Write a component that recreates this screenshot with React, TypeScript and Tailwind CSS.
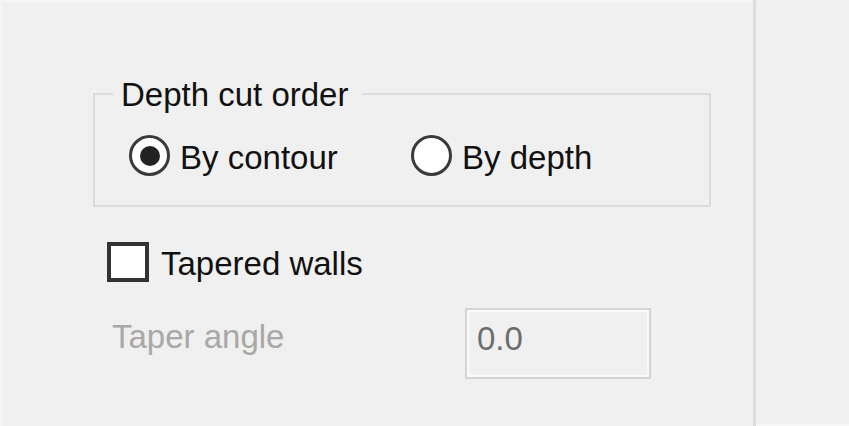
export default function App() {
  const font = { fontFamily: '"Liberation Sans", Arial, sans-serif' };

  return (
    <div
      className="flex h-[426px] w-[849px] overflow-hidden bg-[#f0f0f0] text-[33px] leading-[38px] text-[#111]"
      style={font}
    >
      <div className="flex w-[753px] flex-col border-l-2 border-t-2 border-[#f6f6f6] pt-[91px]">
        {/* Group box */}
        <div className="ml-[91px] flex h-[114px] w-[618px] flex-col border-2 border-[#dcdcdc]">
          <span className="-mt-[19px] ml-[18px] self-start bg-[#f0f0f0] pl-2 pr-[14px]">Depth cut order</span>
          <div className="ml-[34px] mt-[21px] flex">
            <label className="flex w-[282px] items-start">
              <span className="flex h-[41px] w-[41px] items-center justify-center rounded-full border-[3px] border-[#3a3a3a] bg-white">
                <span className="h-[20px] w-[20px] rounded-full bg-[#222]" />
              </span>
              <span className="ml-[10px] mt-1">By contour</span>
            </label>
            <label className="flex items-start">
              <span className="h-[41px] w-[41px] rounded-full border-[3px] border-[#3a3a3a] bg-white" />
              <span className="ml-[10px] mt-1">By depth</span>
            </label>
          </div>
        </div>

        {/* Tapered walls checkbox */}
        <label className="ml-[105px] mt-[35px] flex items-start">
          <span className="h-[40px] w-[42px] border-[4px] border-[#333] bg-white" />
          <span className="ml-[12px] mt-[3px]">Tapered walls</span>
        </label>

        {/* Taper angle */}
        <div className="ml-[110px] mt-[25px] flex items-start">
          <span className="mt-[10px] w-[353px] text-[#a8a8a8]">Taper angle</span>
          <div className="h-[71px] w-[186px] border-2 border-[#d4d4d4]">
            <div className="h-full border-2 border-[#fafafa] pl-[8px] pt-[8px] text-[#6d6d6d]">0.0</div>
          </div>
        </div>
      </div>

      {/* Divider */}
      <div className="h-full w-[3px] bg-[#dcdcdc]" />
      <div className="flex-1 border-b-2 border-[#f6f6f6]" />
    </div>
  );
}
